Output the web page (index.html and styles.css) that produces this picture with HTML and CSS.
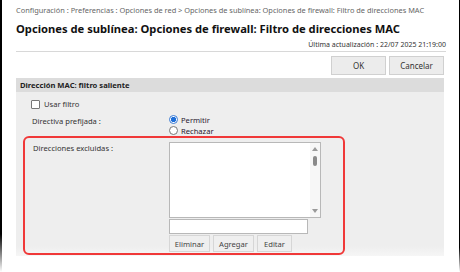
FILE: index.html
```html
<!DOCTYPE html>
<html lang="es">
<head>
    <meta charset="UTF-8">
    <meta name="viewport" content="width=device-width, initial-scale=1.0">
    <title>Filtro de direcciones MAC</title>
    <link rel="stylesheet" href="styles.css">
</head>
<body>
<div class="page">
    <div class="breadcrumb">Configuración : Preferencias : Opciones de red &gt; Opciones de sublínea: Opciones de firewall: Filtro de direcciones MAC</div>
    <h1 class="title">Opciones de sublínea: Opciones de firewall: Filtro de direcciones MAC</h1>
    <div class="updated">Última actualización : 22/07 2025 21:19:00</div>
    <div class="actions">
        <button class="btn">OK</button>
        <button class="btn">Cancelar</button>
    </div>

    <div class="section">
        <div class="section-head">Dirección MAC: filtro saliente</div>
        <div class="section-body">
            <label class="check-row">
                <span class="checkbox"></span>
                Usar filtro
            </label>

            <div class="field-row">
                <div class="field-label">Directiva prefijada :</div>
                <div class="radio-group">
                    <label class="radio-row"><span class="radio checked"></span>Permitir</label>
                    <label class="radio-row"><span class="radio"></span>Rechazar</label>
                </div>
            </div>

            <div class="highlight">
                <div class="field-label">Direcciones excluidas :</div>
                <div class="list-editor">
                    <div class="listbox">
                        <div class="scroll">
                            <span class="arrow up"></span>
                            <span class="thumb"></span>
                            <span class="arrow down"></span>
                        </div>
                    </div>
                    <div class="entry"></div>
                    <div class="list-buttons">
                        <button class="small-btn w-elim">Eliminar</button>
                        <button class="small-btn w-agr">Agregar</button>
                        <button class="small-btn w-edit">Editar</button>
                    </div>
                </div>
            </div>
        </div>
    </div>
</div>
</body>
</html>
```

FILE: styles.css
```css
html, body {
    margin: 0;
    height: 100%;
}
body {
    font-family: "Noto Sans", "DejaVu Sans", sans-serif;
    color: #333;
    background:
        linear-gradient(to bottom, #000 86%, #fff 100%) left top / 2px 100% no-repeat,
        linear-gradient(to bottom, #000 91%, #fff 100%) right top / 1px 100% no-repeat,
        #fff;
}
.page {
    padding: 0 14px 0 16px;
}
.breadcrumb {
    font-size: 7.4px;
    color: #666;
    line-height: 14px;
    padding: 3px 0;
    white-space: nowrap;
}
.title {
    margin: 0;
    font-size: 11.2px;
    font-weight: bold;
    color: #111;
    line-height: 18px;
    white-space: nowrap;
}
.updated {
    margin-top: 1px;
    font-size: 7px;
    line-height: 12px;
    text-align: right;
    color: #333;
    border-bottom: 1px solid #d8d8d8;
}
.actions {
    display: flex;
    justify-content: flex-end;
    gap: 3px;
    padding-right: 2px;
    margin-top: 4px;
}
.btn {
    width: 55px;
    height: 19px;
    padding: 0;
    font-family: inherit;
    font-size: 8px;
    color: #333;
    background-color: #ececec;
    border: 1px solid #d0d0d0;
    border-radius: 0;
}
.section {
    margin-top: 3px;
    margin-right: 2px;
}
.section-head {
    height: 14px;
    line-height: 14px;
    padding-left: 4px;
    font-size: 7.6px;
    font-weight: bold;
    color: #222;
    background-color: #dcdcdc;
}
.section-body {
    background: linear-gradient(to bottom, #eeeeee 94%, #f6f6f6 100%);
    padding: 5px 0 1px 0;
    font-size: 7.6px;
    color: #333;
}
.check-row {
    display: flex;
    align-items: center;
    height: 14px;
    padding-left: 15px;
}
.checkbox {
    width: 7px;
    height: 7px;
    border: 1px solid #777;
    border-radius: 1px;
    background-color: #fff;
    margin-right: 4px;
}
.field-row {
    display: flex;
    margin-top: 3px;
    padding-left: 16px;
}
.field-label {
    width: 137px;
    line-height: 14px;
    flex-shrink: 0;
}
.radio-group {
    display: flex;
    flex-direction: column;
}
.radio-row {
    display: flex;
    align-items: center;
    height: 11px;
    color: #2a2030;
}
.radio {
    width: 7px;
    height: 7px;
    border: 1px solid #777;
    border-radius: 50%;
    background-color: #fff;
    margin-right: 3px;
    box-sizing: content-box;
}
.radio.checked {
    border-color: #3a7bd5;
    background: radial-gradient(circle, #1f6fd8 0 2.3px, #fff 3px);
}
.highlight {
    display: flex;
    margin-left: 7px;
    width: 310px;
    border: 2px solid #f03838;
    border-radius: 6px;
    padding: 4px 0 1px 8px;
}
.highlight .field-label {
    width: 136px;
    line-height: 12px;
}
.list-editor {
    display: flex;
    flex-direction: column;
}
.listbox {
    width: 150px;
    height: 74px;
    border: 1px solid #b8b8b8;
    background-color: #fff;
    display: flex;
    justify-content: flex-end;
}
.scroll {
    width: 10px;
    background-color: #f7f7f7;
    position: relative;
}
.arrow {
    position: absolute;
    left: 2px;
    width: 0;
    height: 0;
    border-left: 3px solid transparent;
    border-right: 3px solid transparent;
}
.arrow.up {
    top: 4px;
    border-bottom: 4px solid #9a9a9a;
}
.arrow.down {
    bottom: 4px;
    border-top: 4px solid #9a9a9a;
}
.thumb {
    position: absolute;
    left: 3px;
    top: 13px;
    width: 4px;
    height: 10px;
    border-radius: 2px;
    background-color: #8a8a8a;
}
.entry {
    width: 137px;
    height: 13px;
    margin-top: 1px;
    border: 1px solid #b8b8b8;
    background-color: #fff;
}
.list-buttons {
    display: flex;
    gap: 3px;
    margin-top: 1px;
}
.small-btn {
    height: 17px;
    padding: 0;
    font-family: inherit;
    font-size: 7.6px;
    color: #444;
    background-color: #efefef;
    border: 1px solid #d6d6d6;
    border-radius: 0;
}
.w-elim { width: 41px; }
.w-agr { width: 41px; }
.w-edit { width: 35px; }
```
